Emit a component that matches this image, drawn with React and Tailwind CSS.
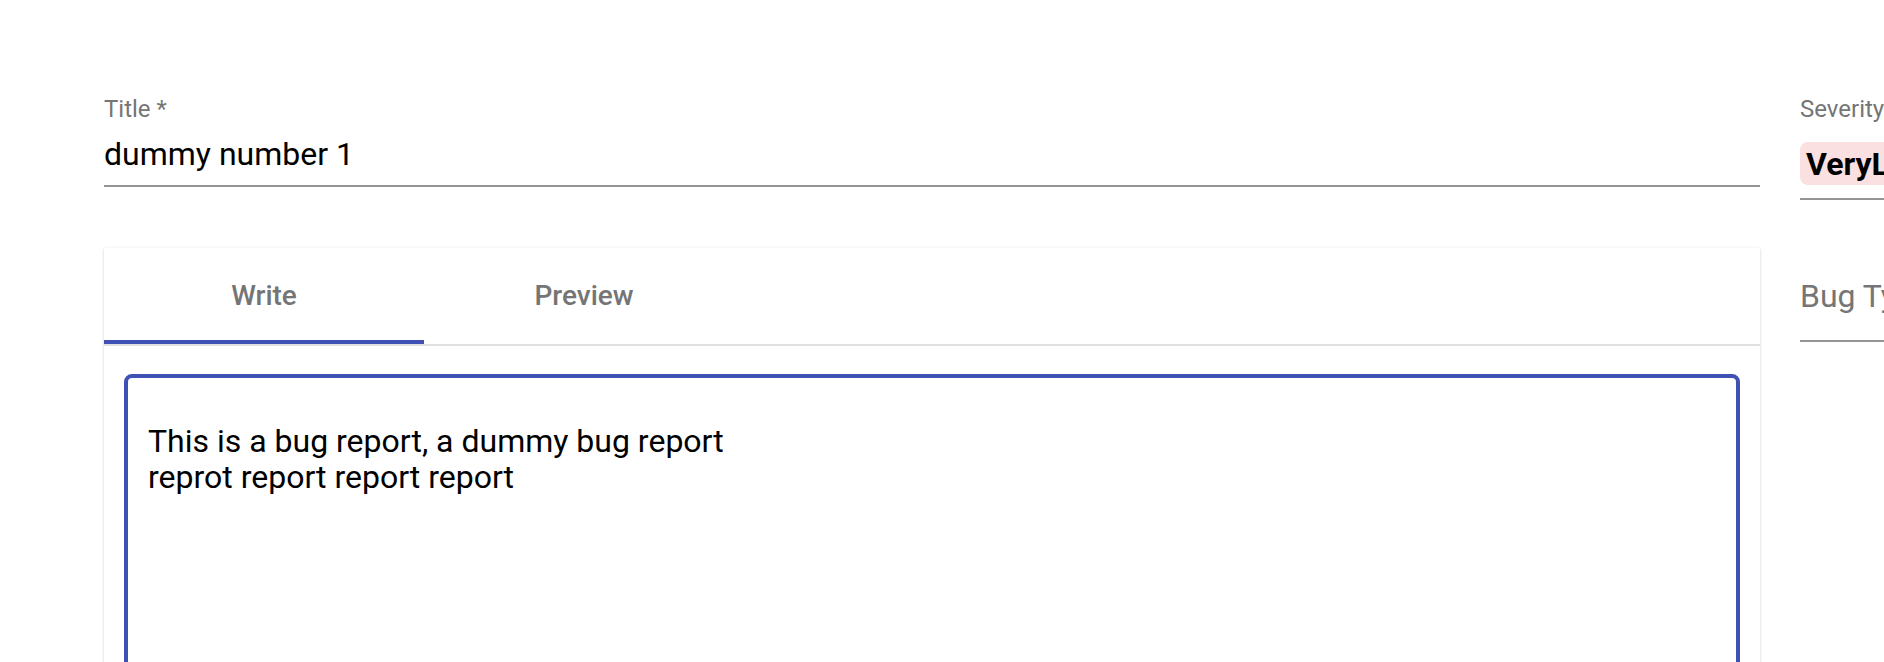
import { useState } from "react";

const tabs = ["Write", "Preview"];

function Underlined({ label, children }) {
  return (
    <div>
      <div className="text-[24px] leading-[34px] text-[#757575]">{label}</div>
      {children}
    </div>
  );
}

export default function App() {
  const [tab, setTab] = useState("Write");
  const [body, setBody] = useState(
    "This is a bug report, a dummy bug report\nreprot report report report"
  );

  return (
    <div
      className="w-[1884px] h-[662px] overflow-hidden bg-white"
      style={{ fontFamily: "Roboto, 'Liberation Sans', sans-serif" }}
    >
      <div className="flex gap-[40px] pt-[92px] pl-[104px]">
        {/* main column */}
        <div className="w-[1656px] shrink-0">
          <Underlined label="Title *">
            <div className="pt-[5px] pb-[8px] border-b-2 border-[#949494] text-[32px] leading-[46px] text-black">
              dummy number 1
            </div>
          </Underlined>

          <div className="mt-[61px] bg-white shadow-[0_2px_3px_rgba(0,0,0,0.12),0_0_3px_rgba(0,0,0,0.08)]">
            <div className="flex">
              {tabs.map((t) => (
                <button
                  key={t}
                  onClick={() => setTab(t)}
                  className={
                    "w-[320px] h-[96px] pt-[4px] border-b-4 text-[28px] font-medium text-[#757575] " +
                    (tab === t ? "border-[#3f51b5]" : "border-transparent")
                  }
                >
                  {t}
                </button>
              ))}
            </div>
            <div className="h-[2px] bg-[#e0e0e0]" />

            <div className="px-[20px] pt-[28px]">
              <textarea
                value={body}
                onChange={(e) => setBody(e.target.value)}
                className="block w-full h-[420px] resize-none rounded-[8px] border-4 border-[#3f51b5] outline-none pl-[20px] pt-[45px] text-[32px] leading-[36px] text-black"
              />
            </div>
          </div>
        </div>

        {/* side column */}
        <div className="w-[500px] shrink-0">
          <Underlined label="Severity">
            <div className="mt-[16px] pb-[13px] border-b-2 border-[#949494]">
              <span className="inline-flex items-center h-[43px] px-[6px] rounded-[8px] bg-[#fae0e0] text-[32px] font-bold text-black whitespace-nowrap">
                VeryLow
              </span>
            </div>
          </Underlined>

          <div className="mt-[73px] pb-[21px] border-b-2 border-[#949494] text-[32px] leading-[46px] text-[#757575]">
            Bug Type
          </div>
        </div>
      </div>
    </div>
  );
}
